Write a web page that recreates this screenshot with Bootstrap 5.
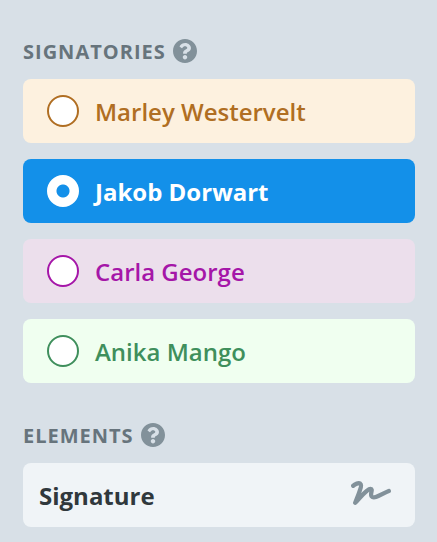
<!DOCTYPE html>
<html lang="en">
<head>
<meta charset="utf-8">
<meta name="viewport" content="width=device-width, initial-scale=1">
<title>Signatories</title>
<link href="https://cdn.jsdelivr.net/npm/bootstrap@5.3.0/dist/css/bootstrap.min.css" rel="stylesheet">
<style>
  body { background: #d8e0e7; font-family: "Open Sans", "Noto Sans", sans-serif; }
  .sidebar { padding: 35px 22px 15px 23px; }
  .panel-section + .panel-section { margin-top: 36px; }
  .section-head { gap: 7px; margin-bottom: 12px; }
  .section-title { padding-top: 2px; font-size: 20px; line-height: 30px; font-weight: 700; letter-spacing: 1px; color: #67747c; }
  .help-btn { color: #82919a; }
  .tile { min-height: 64px; border-radius: 8px; font-size: 24px; line-height: 32px; }
  .tile-label { padding-top: 2px; }
  .signatory { background: var(--tint); color: var(--ink); font-weight: 600; cursor: pointer; }
  .signatory .form-check-input { width: 32px; height: 32px; border: 2px solid var(--ink); background: #fff; }
  .signatory.active { font-weight: 700; }
  .signatory .form-check-input:checked { background: radial-gradient(circle, var(--tint) 6px, #fff 7px); }
  .amber { --tint: #fdf1df; --ink: #b06e22; }
  .blue { --tint: #1390e9; --ink: #fff; }
  .purple { --tint: #ecdfec; --ink: #a516a8; }
  .green { --tint: #f0fff0; --ink: #3f8f5c; }
  .element-tile, .element-tile:hover { background: #f0f4f7; color: #30383c; font-weight: 700; }
</style>
</head>
<body>
<main class="sidebar">
  <section class="panel-section" aria-labelledby="signatories-title">
    <div class="section-head d-flex align-items-center">
      <h2 class="section-title mb-0" id="signatories-title">SIGNATORIES</h2>
      <button type="button" class="help-btn btn border-0 p-0 d-flex" aria-label="Help with signatories">
        <svg width="24" height="24" viewBox="8 8 496 496" fill="currentColor" aria-hidden="true"><path d="M504 256c0 136.997-111.043 248-248 248S8 392.997 8 256C8 119.083 119.043 8 256 8s248 111.083 248 248zM262.655 90c-54.497 0-89.255 22.957-116.549 63.758-3.536 5.286-2.353 12.415 2.715 16.258l34.699 26.31c5.205 3.947 12.621 3.008 16.665-2.122 17.864-22.658 30.113-35.797 57.303-35.797 20.429 0 45.698 13.148 45.698 32.958 0 14.976-12.363 22.667-32.534 33.976C247.128 238.528 216 254.941 216 296v4c0 6.627 5.373 12 12 12h56c6.627 0 12-5.373 12-12v-1.333c0-28.462 83.186-29.647 83.186-106.667 0-58.002-60.165-102-116.531-102zM256 338c-25.365 0-46 20.635-46 46 0 25.364 20.635 46 46 46s46-20.636 46-46c0-25.364-20.635-46-46-46z"/></svg>
      </button>
    </div>
    <div class="d-grid gap-3">
      <label class="tile signatory amber d-flex align-items-center gap-3 px-4" for="marley">
        <input class="form-check-input flex-shrink-0 m-0" type="radio" name="signatory" id="marley">
        <span class="tile-label">Marley Westervelt</span>
      </label>
      <label class="tile signatory blue active d-flex align-items-center gap-3 px-4" for="jakob">
        <input class="form-check-input flex-shrink-0 m-0" type="radio" name="signatory" id="jakob" checked>
        <span class="tile-label">Jakob Dorwart</span>
      </label>
      <label class="tile signatory purple d-flex align-items-center gap-3 px-4" for="carla">
        <input class="form-check-input flex-shrink-0 m-0" type="radio" name="signatory" id="carla">
        <span class="tile-label">Carla George</span>
      </label>
      <label class="tile signatory green d-flex align-items-center gap-3 px-4" for="anika">
        <input class="form-check-input flex-shrink-0 m-0" type="radio" name="signatory" id="anika">
        <span class="tile-label">Anika Mango</span>
      </label>
    </div>
  </section>
  <section class="panel-section" aria-labelledby="elements-title">
    <div class="section-head d-flex align-items-center">
      <h2 class="section-title mb-0" id="elements-title">ELEMENTS</h2>
      <button type="button" class="help-btn btn border-0 p-0 d-flex" aria-label="Help with elements">
        <svg width="24" height="24" viewBox="8 8 496 496" fill="currentColor" aria-hidden="true"><path d="M504 256c0 136.997-111.043 248-248 248S8 392.997 8 256C8 119.083 119.043 8 256 8s248 111.083 248 248zM262.655 90c-54.497 0-89.255 22.957-116.549 63.758-3.536 5.286-2.353 12.415 2.715 16.258l34.699 26.31c5.205 3.947 12.621 3.008 16.665-2.122 17.864-22.658 30.113-35.797 57.303-35.797 20.429 0 45.698 13.148 45.698 32.958 0 14.976-12.363 22.667-32.534 33.976C247.128 238.528 216 254.941 216 296v4c0 6.627 5.373 12 12 12h56c6.627 0 12-5.373 12-12v-1.333c0-28.462 83.186-29.647 83.186-106.667 0-58.002-60.165-102-116.531-102zM256 338c-25.365 0-46 20.635-46 46 0 25.364 20.635 46 46 46s46-20.636 46-46c0-25.364-20.635-46-46-46z"/></svg>
      </button>
    </div>
    <button type="button" class="tile element-tile btn border-0 w-100 d-flex align-items-center justify-content-between py-0 ps-3 pe-4">
      <span class="tile-label">Signature</span>
      <svg width="40" height="32" viewBox="0 0 40 32" fill="none" stroke="#82919a" stroke-width="4.300" stroke-linecap="round" stroke-linejoin="round" aria-hidden="true"><path d="M2.200 6.800C4 4.800 7.500 3.600 9.300 4.700C11.500 6.200 9 10.500 8 14L4.200 23.800C9 19 15.500 10 19.500 10C22.500 10.200 18.800 14.500 20.500 17.200C23.300 21 31.500 14.300 37.800 12"/></svg>
    </button>
  </section>
</main>
<script src="https://cdn.jsdelivr.net/npm/bootstrap@5.3.0/dist/js/bootstrap.bundle.min.js"></script>
</body>
</html>
